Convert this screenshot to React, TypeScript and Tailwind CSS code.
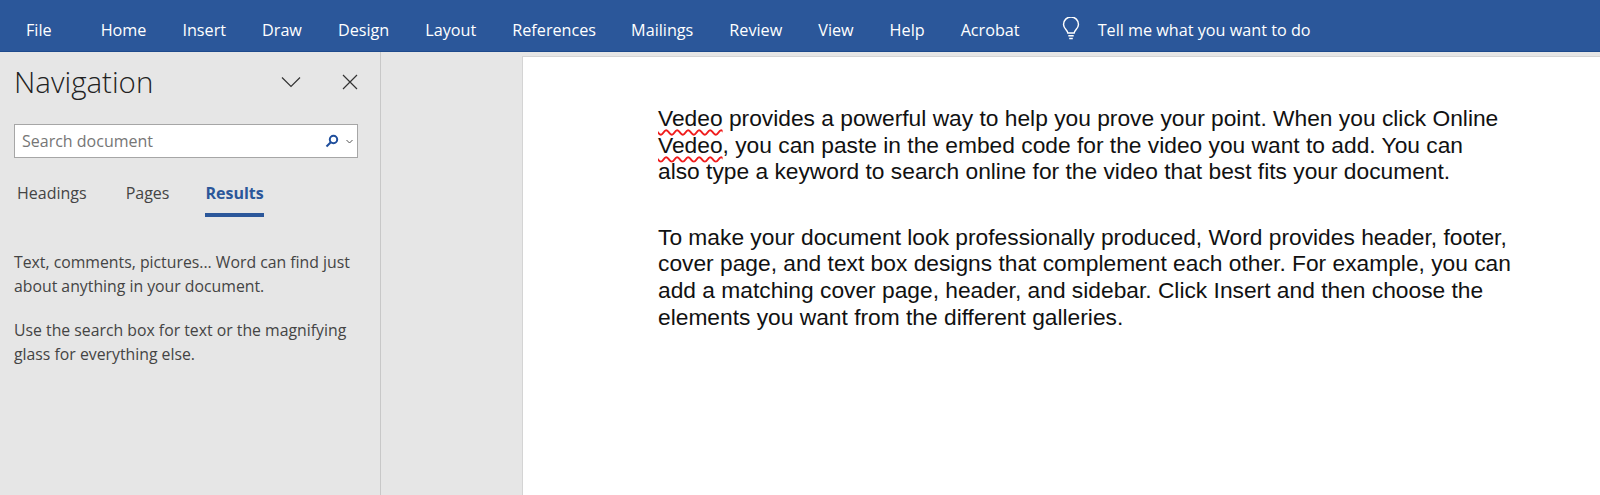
// Word window with the navigation pane open on the Results tab

const tabs = ["Home", "Insert", "Draw", "Design", "Layout", "References", "Mailings", "Review", "View", "Help", "Acrobat"];

const Lightbulb = () => (
  <svg width="18" height="24" viewBox="0 0 20 26" fill="none" stroke="#ffffff" strokeWidth="1.6">
    <path d="M6.500 17.500c0-3-4.800-4.800-4.800-9.600a8.300 8.300 0 0 1 16.600 0c0 4.800-4.800 6.600-4.800 9.600z" />
    <path d="M7 20.500h6M8 23.500h4" />
  </svg>
);

const SearchGlyph = () => (
  <svg width="14" height="14" viewBox="0 0 14 14" fill="none" stroke="#1f4e9c" strokeWidth="2">
    <circle cx="8.500" cy="5.500" r="3.700" />
    <path d="M5.800 8.200 1.500 12.500" />
  </svg>
);

const Squiggle = ({ children }: { children: string }) => (
  <span className="underline decoration-wavy decoration-[#f01c1c] decoration-[1.5px] underline-offset-[3px]">{children}</span>
);

export default function App() {
  return (
    <div className="flex h-[495px] w-[1600px] flex-col overflow-hidden bg-[#e6e6e6] font-['Open_Sans',sans-serif]">
      <header className="flex h-[52px] items-center border-b border-[#1e4a8c] bg-[#2b579a] pt-[10px] text-[16.200px] text-white">
        <span className="ml-[26px] mr-[49px]">File</span>
        <nav className="flex gap-[36px]">
          {tabs.map((tab) => (
            <span key={tab} className={tab === "References" ? "-mr-[1px]" : ""}>{tab}</span>
          ))}
        </nav>
        <span className="ml-[42px] mr-[18px] flex -translate-y-[2px]">
          <Lightbulb />
        </span>
        <span>Tell me what you want to do</span>
      </header>

      <div className="flex min-h-0 flex-1">
        <aside className="w-[381px] border-r border-[#c8c8c8] pt-[12px] pl-[14px] pr-[22px]">
          <div className="flex h-[36px] items-center justify-between">
            <h1 className="text-[29.500px] leading-none font-light text-[#222222]">Navigation</h1>
            <div className="flex items-center gap-[41px]">
              <svg width="20" height="12" viewBox="0 0 20 12" fill="none" stroke="#333333" strokeWidth="1.200">
                <path d="M1 1.500 10 10.500 19 1.500" />
              </svg>
              <svg width="16" height="16" viewBox="0 0 16 16" fill="none" stroke="#333333" strokeWidth="1.200">
                <path d="M1 1 15 15M15 1 1 15" />
              </svg>
            </div>
          </div>

          <div className="mt-[24px] flex h-[34px] items-center border border-[#a6a6a6] bg-white pl-[7px] pr-[4px]">
            <span className="flex-1 text-[16px] text-[#767676]">Search document</span>
            <SearchGlyph />
            <svg className="ml-[7px]" width="7" height="5" viewBox="0 0 7 5" fill="none" stroke="#555555">
              <path d="M.5 1 3.500 4 6.500 1" />
            </svg>
          </div>

          <div className="mt-[21px] flex gap-[39px] pl-[3px] text-[16px] text-[#444444]">
            <span className="pt-[2px]">Headings</span>
            <span className="pt-[2px]">Pages</span>
            <span className="-ml-[3px] border-b-[4px] border-[#2b579a] pt-[2px] pb-[8px] font-bold text-[#2b579a]">Results</span>
          </div>

          <div className="mt-[34px] text-[15.800px] leading-[23.500px] text-[#444444]">
            <p>Text, comments, pictures... Word can find just about anything in your document.</p>
            <p className="mt-[21px]">Use the search box for text or the magnifying glass for everything else.</p>
          </div>
        </aside>

        <main className="ml-[141px] mt-[4px] flex-1 border-t border-l border-[#d4d4d4] bg-white pl-[135px] pr-[84px] pt-[48px] font-['Liberation_Sans',sans-serif] text-[22.780px] leading-[26.600px] text-[#111111]">
          <p>
            <Squiggle>Vedeo</Squiggle> provides a powerful way to help you prove your point. When you click Online{" "}
            <Squiggle>Vedeo</Squiggle>, you can paste in the embed code for the video you want to add. You can
            <br />
            also type a keyword to search online for the video that best fits your document.
          </p>
          <p className="mt-[39px]">
            To make your document look professionally produced, Word provides header, footer, cover page, and text box designs that complement each other. For example, you can add a matching cover page, header, and sidebar. Click Insert and then choose the elements you want from the different galleries.
          </p>
        </main>
      </div>
    </div>
  );
}
